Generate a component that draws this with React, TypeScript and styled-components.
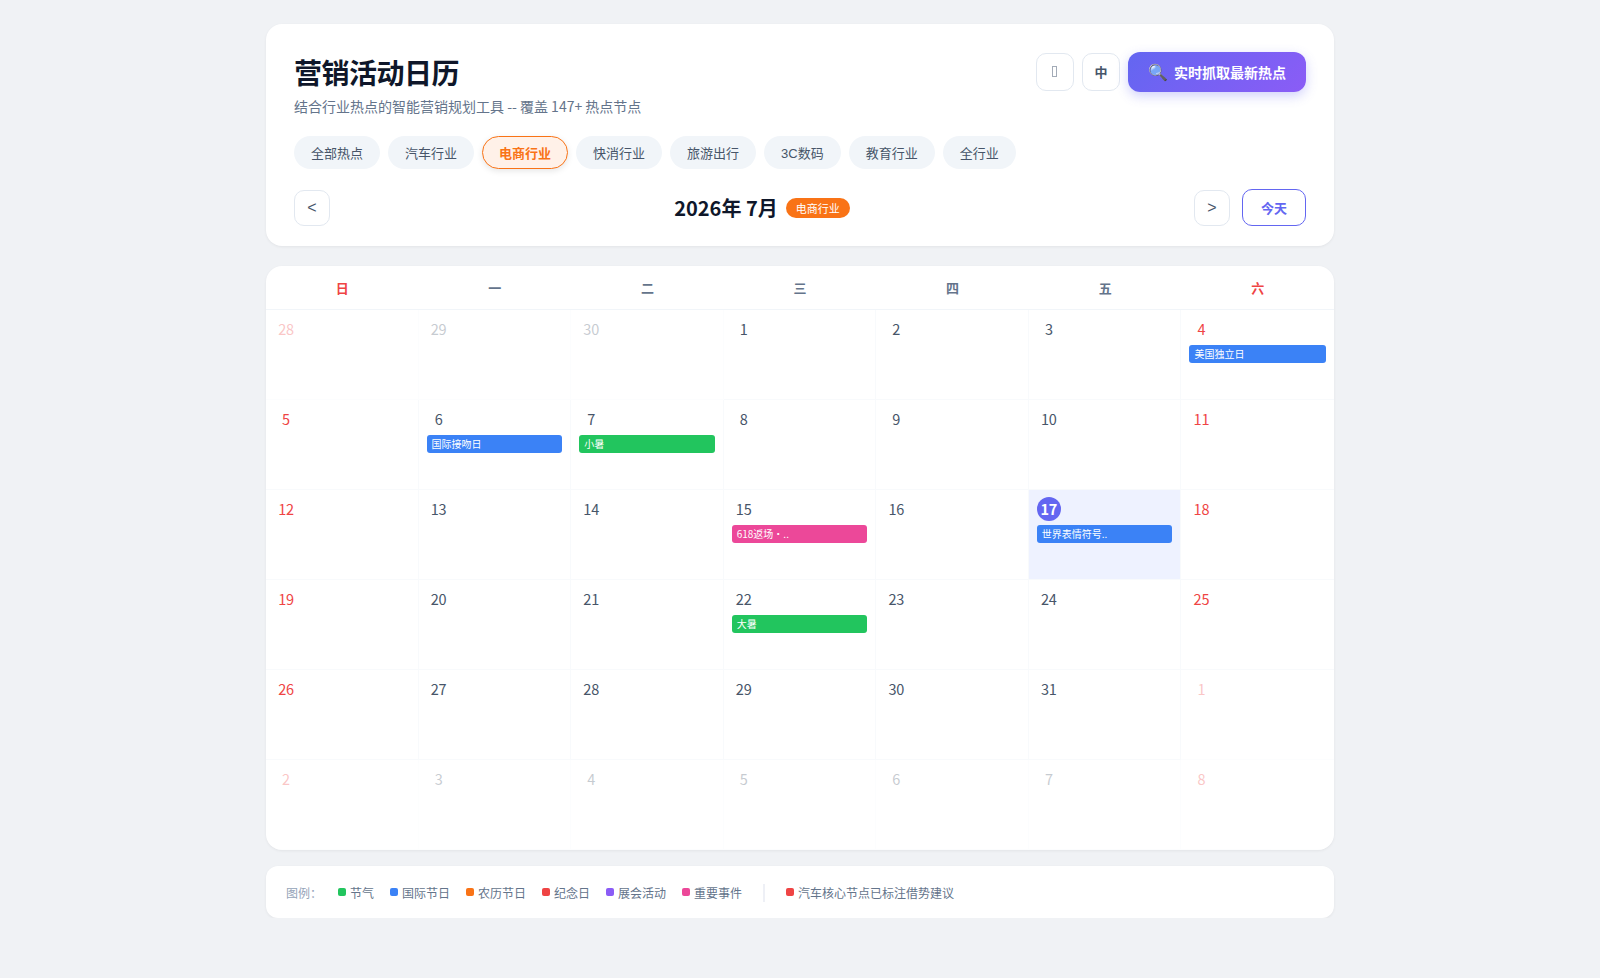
import { useState } from "react";
import styled, { createGlobalStyle, css } from "styled-components";

const GlobalStyle = createGlobalStyle`
  * {
    margin: 0;
    padding: 0;
    box-sizing: border-box;
  }
  body {
    font-family: "Noto Sans CJK SC", sans-serif;
    background-color: #f0f2f5;
    color: #1e293b;
  }
  button {
    font-family: "Liberation Sans", "Noto Sans CJK SC", sans-serif;
    cursor: pointer;
  }
`;

const Container = styled.main`
  width: 1068px;
  margin: 24px auto 0;
`;

const Card = styled.section`
  background-color: #fff;
  border-radius: 16px;
  box-shadow: 0 1px 3px rgba(0, 0, 0, 0.06);
`;

const HeaderCard = styled(Card)`
  height: 222px;
  padding: 28px 28px 20px;
  margin-bottom: 20px;
`;

const HeaderTop = styled.header`
  display: flex;
  justify-content: space-between;
  align-items: flex-start;
  height: 68px;
  margin-bottom: 16px;
`;

const Title = styled.h1`
  font-size: 28px;
  font-weight: 700;
  line-height: 41px;
  letter-spacing: -0.5px;
  color: #0f172a;
`;

const SubTitle = styled.p`
  margin-top: 3px;
  font-size: 14px;
  line-height: 20px;
  color: #64748b;
`;

const Actions = styled.div`
  display: flex;
  align-items: center;
  gap: 8px;
`;

const IconButton = styled.button`
  display: flex;
  align-items: center;
  justify-content: center;
  width: 38px;
  height: 38px;
  border: 1px solid #e2e8f0;
  border-radius: 10px;
  background-color: #fff;
  font-size: 13px;
  font-weight: 700;
  color: #475569;
`;

const LangButton = styled(IconButton)`
  padding-bottom: 1px;
`;

const ThemeGlyph = styled.span`
  width: 5px;
  height: 11px;
  margin: 0 1px 1px 0;
  border: 1px solid #a3abb7;
`;

const FetchButton = styled.button`
  display: flex;
  align-items: center;
  gap: 6px;
  width: 178px;
  height: 40px;
  padding: 0 20px;
  border: none;
  border-radius: 12px;
  background: linear-gradient(135deg, #6366f1, #8b5cf6);
  box-shadow: 0 4px 12px rgba(99, 102, 241, 0.3);
  font-size: 14px;
  font-weight: 600;
  white-space: nowrap;
  color: #fff;
  span {
    font-size: 16px;
  }
`;

const Tabs = styled.div`
  display: flex;
  gap: 8px;
  margin-bottom: 20px;
`;

const Tab = styled.button<{ $active: boolean }>`
  height: 33px;
  padding: 0 16px;
  border: 1px solid transparent;
  border-radius: 20px;
  background-color: #f1f5f9;
  font-size: 13px;
  color: #475569;
  ${(props) =>
    props.$active &&
    css`
      border-color: #f97316;
      background-color: #fff1e8;
      box-shadow: 0 2px 6px rgba(0, 0, 0, 0.1);
      font-weight: 600;
      color: #f97316;
    `}
`;

const MonthNav = styled.nav`
  display: flex;
  align-items: center;
  justify-content: space-between;
  height: 37px;
`;

const NavButton = styled(IconButton)`
  width: 36px;
  height: 36px;
  margin-top: 1px;
  font-size: 16px;
  font-weight: 400;
`;

const MonthLabel = styled.h2`
  display: flex;
  align-items: center;
  gap: 8px;
  font-size: 20px;
  font-weight: 700;
  color: #0f172a;
`;

const IndustryBadge = styled.span`
  height: 20px;
  padding: 0 10px;
  border-radius: 10px;
  background-color: #f97316;
  font-size: 11px;
  font-weight: 400;
  line-height: 21px;
  color: #fff;
`;

const NavRight = styled.div`
  display: flex;
  align-items: center;
  gap: 12px;
`;

const TodayButton = styled.button`
  width: 64px;
  height: 37px;
  border: 1px solid #6366f1;
  border-radius: 10px;
  background-color: #fff;
  font-size: 13px;
  font-weight: 600;
  color: #6366f1;
`;

const CalendarCard = styled(Card)`
  margin-bottom: 16px;
  overflow: hidden;
`;

const WeekRow = styled.div`
  display: grid;
  grid-template-columns: repeat(7, 1fr);
  height: 44px;
  border-bottom: 1px solid #f1f5f9;
`;

const WeekDay = styled.div<{ $weekend: boolean }>`
  font-size: 13px;
  font-weight: 600;
  line-height: 43px;
  text-align: center;
  color: ${(props) => (props.$weekend ? "#ef4444" : "#64748b")};
`;

const DayGrid = styled.div`
  display: grid;
  grid-template-columns: repeat(7, 1fr);
  grid-auto-rows: 90px;
`;

const DayCell = styled.div<{ $outside: boolean; $today: boolean }>`
  min-width: 0;
  padding: 7px 8px;
  border-right: 1px solid #f8fafc;
  border-bottom: 1px solid #f8fafc;
  background-color: ${(props) => (props.$today ? "#eef2ff" : "#fff")};
  opacity: ${(props) => (props.$outside ? 0.3 : 1)};
  &:nth-child(7n) {
    border-right: none;
  }
`;

const DayNumber = styled.div<{ $weekend: boolean; $today: boolean }>`
  width: 24px;
  height: 24px;
  margin-bottom: 4px;
  border-radius: 50%;
  font-size: 14.5px;
  line-height: 23px;
  letter-spacing: -0.2px;
  text-align: center;
  color: ${(props) => (props.$weekend ? "#ef4444" : "#475569")};
  ${(props) =>
    props.$today &&
    css`
      background-color: #6366f1;
      font-weight: 700;
      color: #fff;
    `}
`;

const EventBar = styled.div<{ $color: string }>`
  height: 18px;
  padding: 0 5px;
  border-radius: 3px;
  background-color: ${(props) => props.$color};
  font-size: 10px;
  line-height: 18px;
  white-space: nowrap;
  overflow: hidden;
  color: #fff;
`;

const Legend = styled(Card)`
  display: flex;
  align-items: center;
  gap: 16px;
  height: 52px;
  padding: 0 20px;
  border-radius: 12px;
  font-size: 12px;
  color: #64748b;
`;

const LegendLabel = styled.span`
  color: #94a3b8;
`;

const LegendItem = styled.span<{ $color: string }>`
  display: flex;
  align-items: center;
  &::before {
    content: "";
    width: 8px;
    height: 8px;
    margin-right: 4px;
    border-radius: 2px;
    background-color: ${(props) => props.$color};
  }
`;

const Divider = styled.span`
  width: 2px;
  height: 18px;
  margin: 2px 5px 0 5px;
  background-color: #eef0f6;
`;

const colors = {
  solar: "#22c55e",
  international: "#3b82f6",
  lunar: "#f97316",
  memorial: "#ef4444",
  expo: "#8b5cf6",
  major: "#ec4899",
};

const industries = [
  "全部热点",
  "汽车行业",
  "电商行业",
  "快消行业",
  "旅游出行",
  "3C数码",
  "教育行业",
  "全行业",
];

const weekDays = ["日", "一", "二", "三", "四", "五", "六"];

const events: Record<number, { name: string; color: string }> = {
  4: { name: "美国独立日", color: colors.international },
  6: { name: "国际接吻日", color: colors.international },
  7: { name: "小暑", color: colors.solar },
  15: { name: "618返场・..", color: colors.major },
  17: { name: "世界表情符号..", color: colors.international },
  22: { name: "大暑", color: colors.solar },
};

const legends = [
  { name: "节气", color: colors.solar },
  { name: "国际节日", color: colors.international },
  { name: "农历节日", color: colors.lunar },
  { name: "纪念日", color: colors.memorial },
  { name: "展会活动", color: colors.expo },
  { name: "重要事件", color: colors.major },
];

const TODAY = 17;

// 6 weeks starting on Sunday, June 28
const days = Array.from({ length: 42 }, (_, i) => {
  const date = new Date(2026, 5, 28 + i);
  return { day: date.getDate(), outside: date.getMonth() !== 6 };
});

function App() {
  const [industry, setIndustry] = useState("电商行业");
  return (
    <>
      <GlobalStyle />
      <Container>
        <HeaderCard>
          <HeaderTop>
            <div>
              <Title>营销活动日历</Title>
              <SubTitle>结合行业热点的智能营销规划工具 -- 覆盖 147+ 热点节点</SubTitle>
            </div>
            <Actions>
              <IconButton>
                <ThemeGlyph />
              </IconButton>
              <LangButton>中</LangButton>
              <FetchButton>
                <span>🔍</span>实时抓取最新热点
              </FetchButton>
            </Actions>
          </HeaderTop>
          <Tabs>
            {industries.map((name) => (
              <Tab
                key={name}
                $active={name === industry}
                onClick={() => setIndustry(name)}
              >
                {name}
              </Tab>
            ))}
          </Tabs>
          <MonthNav>
            <NavButton>&lt;</NavButton>
            <MonthLabel>
              2026年 7月<IndustryBadge>{industry}</IndustryBadge>
            </MonthLabel>
            <NavRight>
              <NavButton>&gt;</NavButton>
              <TodayButton>今天</TodayButton>
            </NavRight>
          </MonthNav>
        </HeaderCard>
        <CalendarCard>
          <WeekRow>
            {weekDays.map((name, i) => (
              <WeekDay key={name} $weekend={i % 6 === 0}>
                {name}
              </WeekDay>
            ))}
          </WeekRow>
          <DayGrid>
            {days.map(({ day, outside }, i) => {
              const today = !outside && day === TODAY;
              const event = outside ? undefined : events[day];
              return (
                <DayCell key={i} $outside={outside} $today={today}>
                  <DayNumber
                    $weekend={i % 7 === 0 || i % 7 === 6}
                    $today={today}
                  >
                    {day}
                  </DayNumber>
                  {event && (
                    <EventBar $color={event.color}>{event.name}</EventBar>
                  )}
                </DayCell>
              );
            })}
          </DayGrid>
        </CalendarCard>
        <Legend>
          <LegendLabel>图例：</LegendLabel>
          {legends.map(({ name, color }) => (
            <LegendItem key={name} $color={color}>
              {name}
            </LegendItem>
          ))}
          <Divider />
          <LegendItem $color={colors.memorial}>
            汽车核心节点已标注借势建议
          </LegendItem>
        </Legend>
      </Container>
    </>
  );
}

export default App;
